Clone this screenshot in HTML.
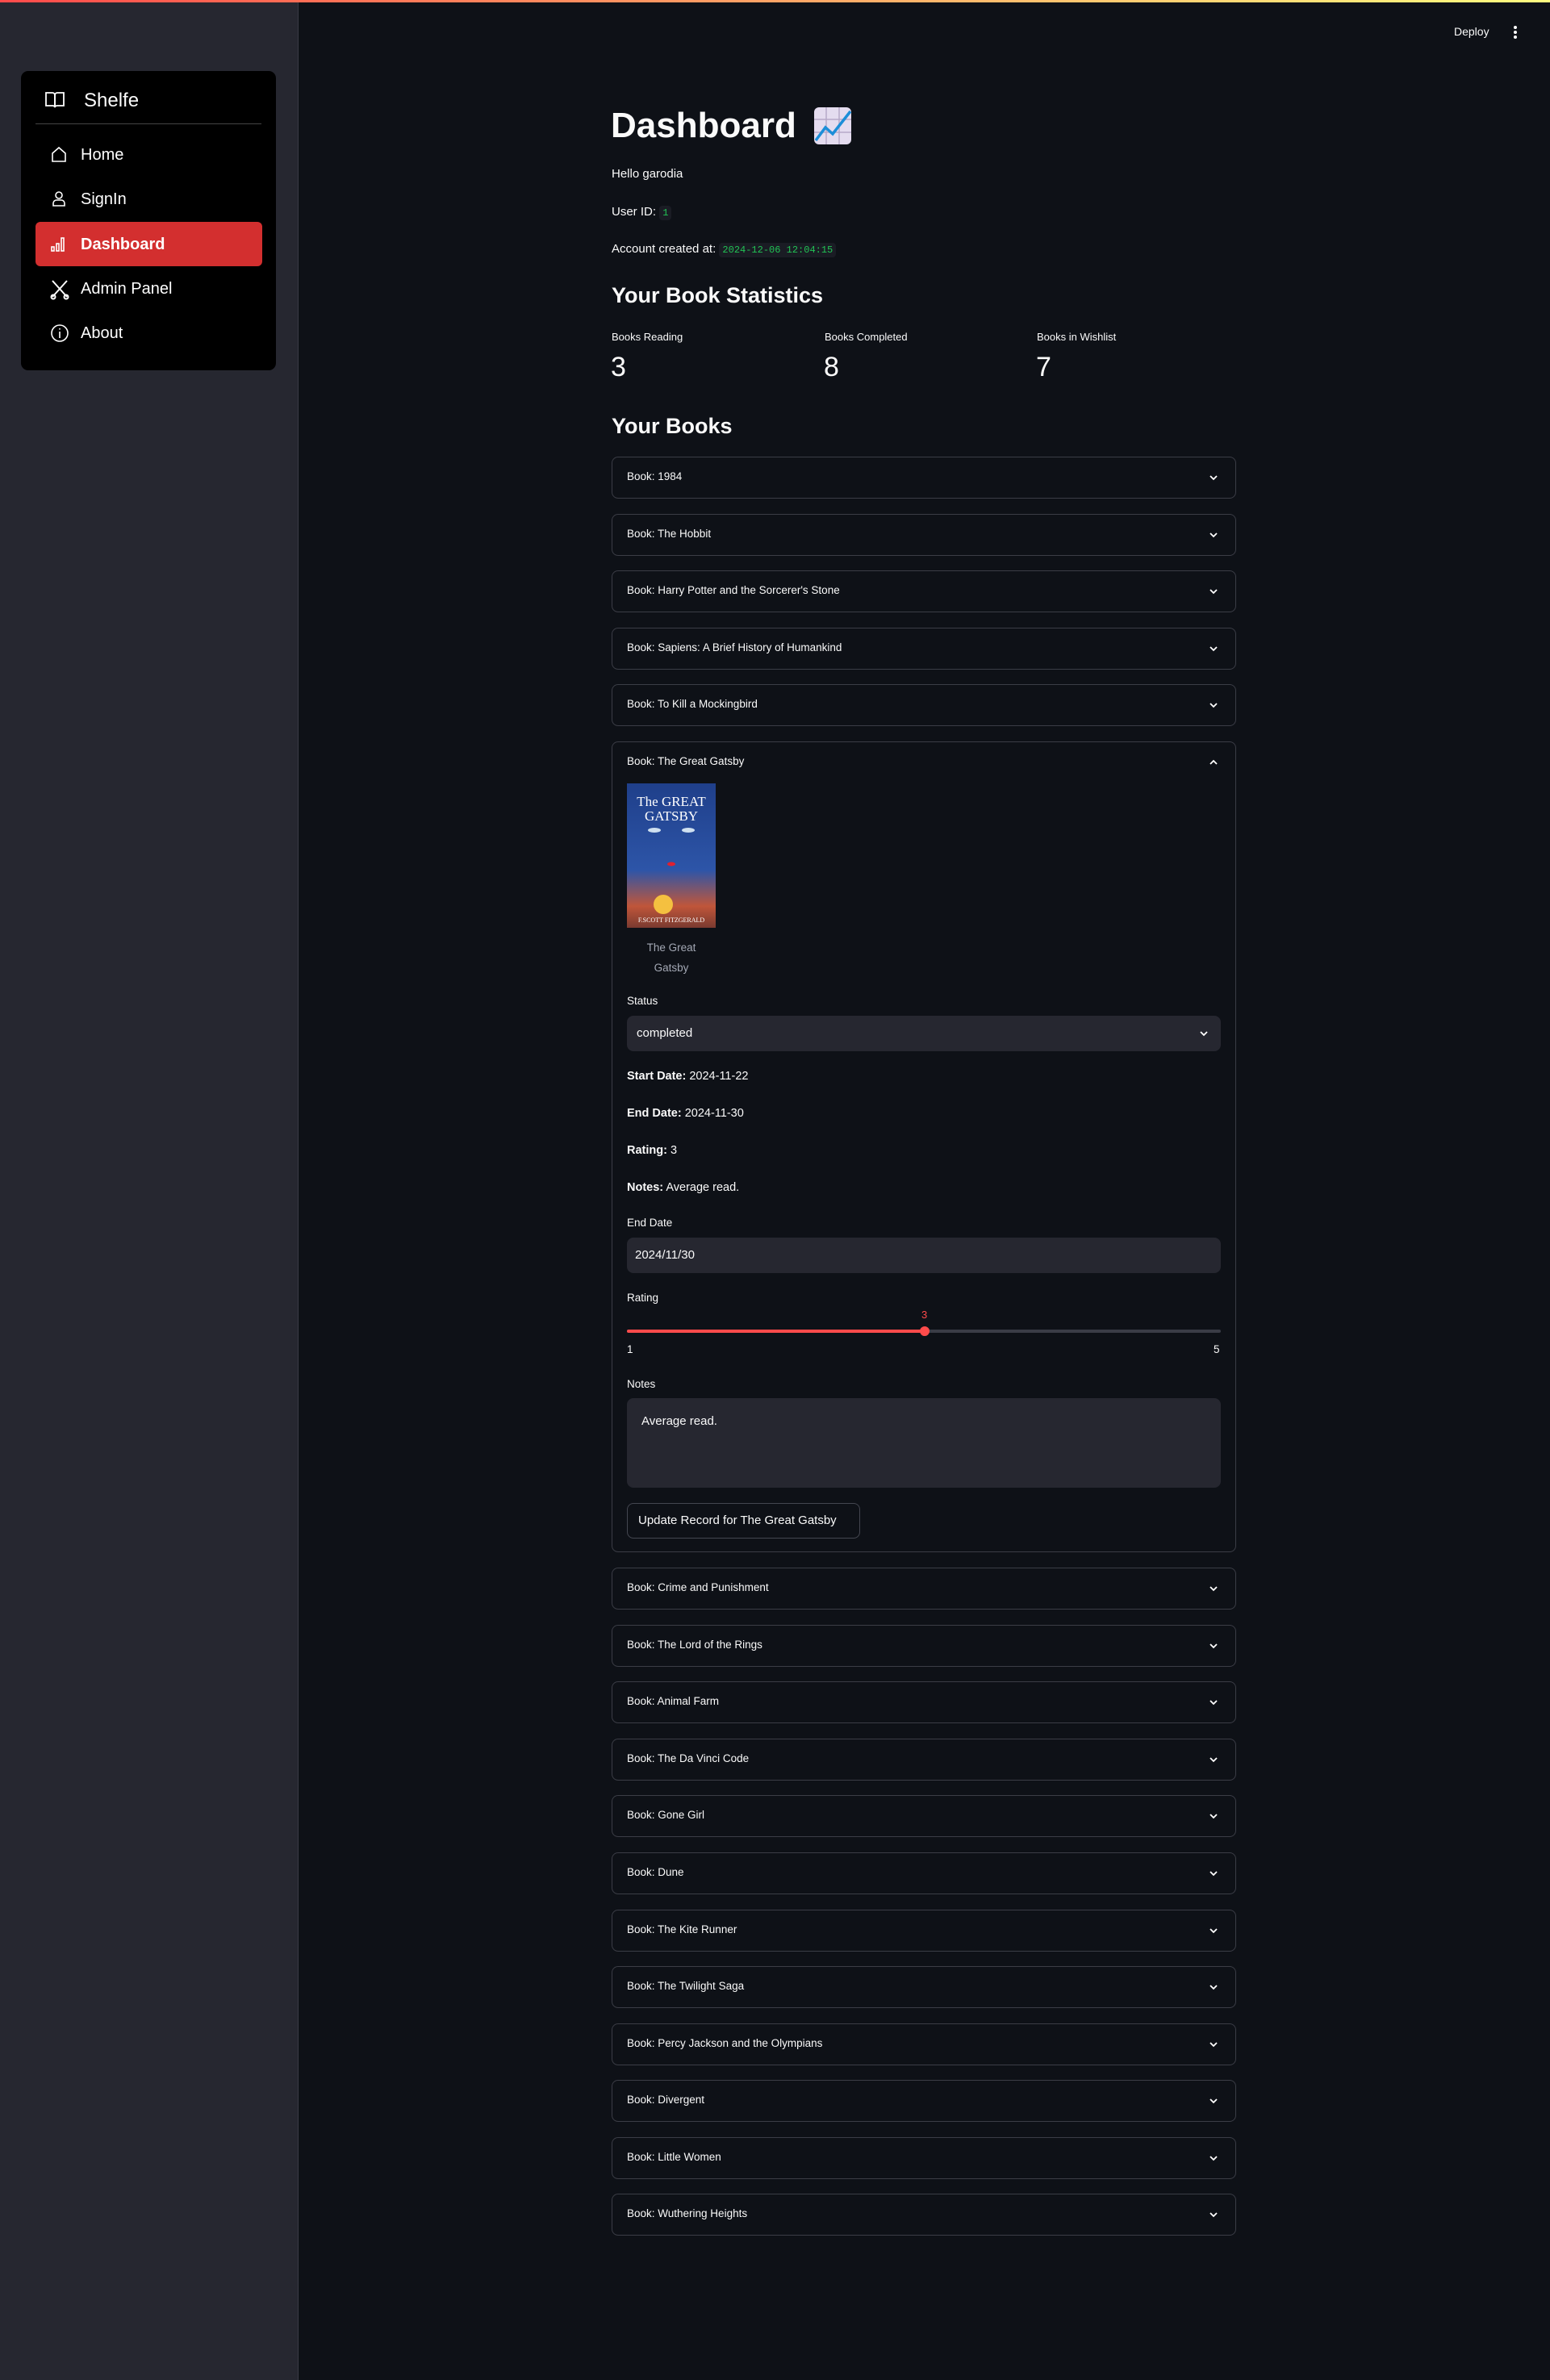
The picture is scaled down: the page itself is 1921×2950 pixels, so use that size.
<!DOCTYPE html>
<html><head><meta charset="utf-8">
<style>
*{margin:0;padding:0;box-sizing:border-box}
body{width:1921px;height:2950px;background:#0e1117;font-family:"Liberation Sans",sans-serif;color:#fafafa;position:relative;overflow:hidden}
.a{position:absolute}
#topbar{left:0;top:0;width:1921px;height:3px;background:linear-gradient(90deg,#ff4b4b,#fffd80)}
#side{left:0;top:3px;width:370px;height:2947px;background:#262730;border-right:1px solid #3a3b45}
#nav{left:26px;top:88px;width:316px;height:371px;background:#000;border-radius:9px}
.ni{position:absolute;left:60px;font-size:20px;color:#fff;line-height:24px}
.ic{position:absolute;left:0}
.t{font-size:15px;line-height:18px;white-space:nowrap}
.exp{position:absolute;left:758px;width:774px;height:52px;border:1px solid #3b3d46;border-radius:8px}
.exp span{position:absolute;left:18px;top:16px;font-size:13.5px;color:#fafafa}
.chev{position:absolute;right:20px;top:18px}
.code{font-family:"Liberation Mono",monospace;color:#21c354;background:#1a1c24;border-radius:4px;padding:2px 4px;font-size:12px}
.lbl{font-size:13.5px;color:#fafafa}
.box{background:#262730;border-radius:8px}
</style></head><body>
<div class="a" id="topbar"></div>
<div class="a" id="side"></div>
<div class="a" id="nav">
  <svg class="a" style="left:28px;top:24px" width="28" height="24" viewBox="0 0 28 24" fill="none" stroke="#fff" stroke-width="1.8"><path d="M3 3h8a3 3 0 0 1 3 3v15a3 3 0 0 0-3-2H3z"/><path d="M25 3h-8a3 3 0 0 0-3 3v15a3 3 0 0 1 3-2h8z"/></svg>
  <div class="a" style="left:78px;top:23px;font-size:24px">Shelfe</div>
  <div class="a" style="left:18px;top:65px;width:280px;height:1px;background:#444"></div>
  <div class="ni" style="top:92px;left:36px">
    <svg class="ic" width="22" height="22" viewBox="0 0 22 22" fill="none" stroke="#fff" stroke-width="1.6"><path d="M3 10 11 3l8 7v10H3z"/></svg>
    <span style="margin-left:38px">Home</span></div>
  <div class="ni" style="top:147px;left:36px">
    <svg class="ic" width="22" height="22" viewBox="0 0 22 22" fill="none" stroke="#fff" stroke-width="1.6"><circle cx="11" cy="7" r="4"/><path d="M4 20v-3a4 4 0 0 1 4-4h6a4 4 0 0 1 4 4v3z"/></svg>
    <span style="margin-left:38px">SignIn</span></div>
  <div class="a" style="left:18px;top:187px;width:281px;height:55px;background:#d32f2f;border-radius:6px"></div>
  <div class="ni" style="top:203px;left:36px;font-weight:bold">
    <svg class="ic" width="22" height="22" viewBox="0 0 22 22" fill="none" stroke="#fff" stroke-width="1.6"><rect x="2" y="15" width="3" height="5"/><rect x="8" y="11" width="3" height="9"/><rect x="14" y="4" width="3" height="16"/></svg>
    <span style="margin-left:38px">Dashboard</span></div>
  <div class="ni" style="top:258px;left:36px">
    <svg class="ic" width="24" height="26" viewBox="0 0 24 26" fill="none" stroke="#fff" stroke-width="2"><path d="M3 2l18 20M21 2 3 22"/><circle cx="4" cy="22" r="2.5"/><circle cx="20" cy="22" r="2.5"/></svg>
    <span style="margin-left:38px">Admin Panel</span></div>
  <div class="ni" style="top:313px;left:36px">
    <svg class="ic" width="24" height="24" viewBox="0 0 24 24" fill="none" stroke="#fff" stroke-width="1.6"><circle cx="12" cy="12" r="10"/><path d="M12 10v8M12 6v1.5"/></svg>
    <span style="margin-left:38px">About</span></div>
</div>

<div class="a" style="left:1802px;top:31px;font-size:14px">Deploy</div>
<svg class="a" style="left:1874px;top:30px" width="8" height="20"><circle cx="4" cy="4" r="2" fill="#fff"/><circle cx="4" cy="10" r="2" fill="#fff"/><circle cx="4" cy="16" r="2" fill="#fff"/></svg>

<div class="a" style="left:757px;top:128px;font-size:44px;font-weight:bold;line-height:56px">Dashboard</div>
<svg class="a" style="left:1008px;top:132px" width="48" height="48" viewBox="0 0 48 48"><rect x="1" y="1" width="46" height="46" rx="6" fill="#e4dcef"/><path d="M16 1v46M32 1v46M1 16h46M1 32h46" stroke="#b6a9c8" stroke-width="1.5"/><path d="M3 42 15 26l9 8L46 6" stroke="#1c8ed8" stroke-width="3.5" fill="none"/></svg>

<div class="a t" style="left:758px;top:207px">Hello garodia</div>
<div class="a t" style="left:758px;top:254px">User ID: <span class="code">1</span></div>
<div class="a t" style="left:758px;top:300px">Account created at: <span class="code">2024-12-06 12:04:15</span></div>

<div class="a" style="left:758px;top:351px;font-size:27px;font-weight:bold">Your Book Statistics</div>
<div class="a" style="left:758px;top:410px;font-size:13px">Books Reading</div>
<div class="a" style="left:1022px;top:410px;font-size:13px">Books Completed</div>
<div class="a" style="left:1285px;top:410px;font-size:13px">Books in Wishlist</div>
<div class="a" style="left:757px;top:436px;font-size:34px">3</div>
<div class="a" style="left:1021px;top:436px;font-size:34px">8</div>
<div class="a" style="left:1284px;top:436px;font-size:34px">7</div>

<div class="a" style="left:758px;top:513px;font-size:27px;font-weight:bold">Your Books</div>

<div class="exp" style="top:566px"><span>Book: 1984</span><svg class="chev" width="14" height="14" viewBox="0 0 14 14"><path d="M3 5l4 4 4-4" stroke="#fff" stroke-width="1.8" fill="none"/></svg></div>
<div class="exp" style="top:637px"><span>Book: The Hobbit</span><svg class="chev" width="14" height="14" viewBox="0 0 14 14"><path d="M3 5l4 4 4-4" stroke="#fff" stroke-width="1.8" fill="none"/></svg></div>
<div class="exp" style="top:707px"><span>Book: Harry Potter and the Sorcerer's Stone</span><svg class="chev" width="14" height="14" viewBox="0 0 14 14"><path d="M3 5l4 4 4-4" stroke="#fff" stroke-width="1.8" fill="none"/></svg></div>
<div class="exp" style="top:778px"><span>Book: Sapiens: A Brief History of Humankind</span><svg class="chev" width="14" height="14" viewBox="0 0 14 14"><path d="M3 5l4 4 4-4" stroke="#fff" stroke-width="1.8" fill="none"/></svg></div>
<div class="exp" style="top:848px"><span>Book: To Kill a Mockingbird</span><svg class="chev" width="14" height="14" viewBox="0 0 14 14"><path d="M3 5l4 4 4-4" stroke="#fff" stroke-width="1.8" fill="none"/></svg></div>

<div class="exp" style="top:919px;height:1005px"><span>Book: The Great Gatsby</span><svg class="chev" width="14" height="14" viewBox="0 0 14 14"><path d="M3 9l4-4 4 4" stroke="#fff" stroke-width="1.8" fill="none"/></svg></div>
<svg class="a" style="left:777px;top:971px" width="110" height="179" viewBox="0 0 110 179">
  <defs><linearGradient id="g" x1="0" y1="0" x2="0" y2="1"><stop offset="0" stop-color="#1f3f8a"/><stop offset=".6" stop-color="#2d55a8"/><stop offset=".85" stop-color="#c0563a"/><stop offset="1" stop-color="#7a3a30"/></linearGradient></defs>
  <rect width="110" height="179" fill="url(#g)"/>
  <text x="55" y="28" font-family="Liberation Serif" font-size="17" fill="#fff" text-anchor="middle">The GREAT</text>
  <text x="55" y="46" font-family="Liberation Serif" font-size="17" fill="#fff" text-anchor="middle">GATSBY</text>
  <ellipse cx="34" cy="58" rx="8" ry="3" fill="#cfe0f0"/><ellipse cx="76" cy="58" rx="8" ry="3" fill="#cfe0f0"/>
  <ellipse cx="55" cy="100" rx="5" ry="2.5" fill="#e02030"/>
  <circle cx="45" cy="150" r="12" fill="#f4c040"/>
  <text x="55" y="172" font-family="Liberation Serif" font-size="8" fill="#fff" text-anchor="middle">F.SCOTT FITZGERALD</text>
</svg>
<div class="a" style="left:777px;top:1162px;width:110px;text-align:center;font-size:13.5px;color:#a3a8b4;line-height:25px">The Great<br>Gatsby</div>

<div class="a lbl" style="left:777px;top:1233px">Status</div>
<div class="a box" style="left:777px;top:1259px;width:736px;height:44px"><span class="a" style="left:12px;top:13px;font-size:15px">completed</span><svg class="a" style="right:14px;top:15px" width="14" height="14" viewBox="0 0 14 14"><path d="M3 5l4 4 4-4" stroke="#fff" stroke-width="1.8" fill="none"/></svg></div>
<div class="a t" style="left:777px;top:1325px;font-size:14.5px"><b>Start Date:</b> 2024-11-22</div>
<div class="a t" style="left:777px;top:1371px;font-size:14.5px"><b>End Date:</b> 2024-11-30</div>
<div class="a t" style="left:777px;top:1417px;font-size:14.5px"><b>Rating:</b> 3</div>
<div class="a t" style="left:777px;top:1463px;font-size:14.5px"><b>Notes:</b> Average read.</div>

<div class="a lbl" style="left:777px;top:1508px">End Date</div>
<div class="a box" style="left:777px;top:1534px;width:736px;height:44px"><span class="a" style="left:10px;top:13px;font-size:15px">2024/11/30</span></div>
<div class="a lbl" style="left:777px;top:1601px">Rating</div>
<div class="a" style="left:1142px;top:1622px;font-size:13px;color:#ff4b4b">3</div>
<div class="a" style="left:777px;top:1648px;width:736px;height:4px;background:#3a3c46;border-radius:2px"></div>
<div class="a" style="left:777px;top:1648px;width:369px;height:4px;background:#ff4b4b;border-radius:2px"></div>
<div class="a" style="left:1140px;top:1644px;width:12px;height:12px;border-radius:6px;background:#ff4b4b"></div>
<div class="a" style="left:777px;top:1665px;font-size:13.5px">1</div>
<div class="a" style="left:1504px;top:1665px;font-size:13.5px">5</div>
<div class="a lbl" style="left:777px;top:1708px">Notes</div>
<div class="a box" style="left:777px;top:1733px;width:736px;height:111px"><span class="a" style="left:18px;top:20px;font-size:15px">Average read.</span></div>
<div class="a" style="left:777px;top:1863px;width:289px;height:44px;border:1px solid #444650;border-radius:8px;background:#0e1117"><span class="a" style="left:13px;top:12px;font-size:15px;white-space:nowrap">Update Record for The Great Gatsby</span></div>

<div class="exp" style="top:1943px"><span>Book: Crime and Punishment</span><svg class="chev" width="14" height="14" viewBox="0 0 14 14"><path d="M3 5l4 4 4-4" stroke="#fff" stroke-width="1.8" fill="none"/></svg></div>
<div class="exp" style="top:2014px"><span>Book: The Lord of the Rings</span><svg class="chev" width="14" height="14" viewBox="0 0 14 14"><path d="M3 5l4 4 4-4" stroke="#fff" stroke-width="1.8" fill="none"/></svg></div>
<div class="exp" style="top:2084px"><span>Book: Animal Farm</span><svg class="chev" width="14" height="14" viewBox="0 0 14 14"><path d="M3 5l4 4 4-4" stroke="#fff" stroke-width="1.8" fill="none"/></svg></div>
<div class="exp" style="top:2155px"><span>Book: The Da Vinci Code</span><svg class="chev" width="14" height="14" viewBox="0 0 14 14"><path d="M3 5l4 4 4-4" stroke="#fff" stroke-width="1.8" fill="none"/></svg></div>
<div class="exp" style="top:2225px"><span>Book: Gone Girl</span><svg class="chev" width="14" height="14" viewBox="0 0 14 14"><path d="M3 5l4 4 4-4" stroke="#fff" stroke-width="1.8" fill="none"/></svg></div>
<div class="exp" style="top:2296px"><span>Book: Dune</span><svg class="chev" width="14" height="14" viewBox="0 0 14 14"><path d="M3 5l4 4 4-4" stroke="#fff" stroke-width="1.8" fill="none"/></svg></div>
<div class="exp" style="top:2367px"><span>Book: The Kite Runner</span><svg class="chev" width="14" height="14" viewBox="0 0 14 14"><path d="M3 5l4 4 4-4" stroke="#fff" stroke-width="1.8" fill="none"/></svg></div>
<div class="exp" style="top:2437px"><span>Book: The Twilight Saga</span><svg class="chev" width="14" height="14" viewBox="0 0 14 14"><path d="M3 5l4 4 4-4" stroke="#fff" stroke-width="1.8" fill="none"/></svg></div>
<div class="exp" style="top:2508px"><span>Book: Percy Jackson and the Olympians</span><svg class="chev" width="14" height="14" viewBox="0 0 14 14"><path d="M3 5l4 4 4-4" stroke="#fff" stroke-width="1.8" fill="none"/></svg></div>
<div class="exp" style="top:2578px"><span>Book: Divergent</span><svg class="chev" width="14" height="14" viewBox="0 0 14 14"><path d="M3 5l4 4 4-4" stroke="#fff" stroke-width="1.8" fill="none"/></svg></div>
<div class="exp" style="top:2649px"><span>Book: Little Women</span><svg class="chev" width="14" height="14" viewBox="0 0 14 14"><path d="M3 5l4 4 4-4" stroke="#fff" stroke-width="1.8" fill="none"/></svg></div>
<div class="exp" style="top:2719px"><span>Book: Wuthering Heights</span><svg class="chev" width="14" height="14" viewBox="0 0 14 14"><path d="M3 5l4 4 4-4" stroke="#fff" stroke-width="1.8" fill="none"/></svg></div>
</body></html>
